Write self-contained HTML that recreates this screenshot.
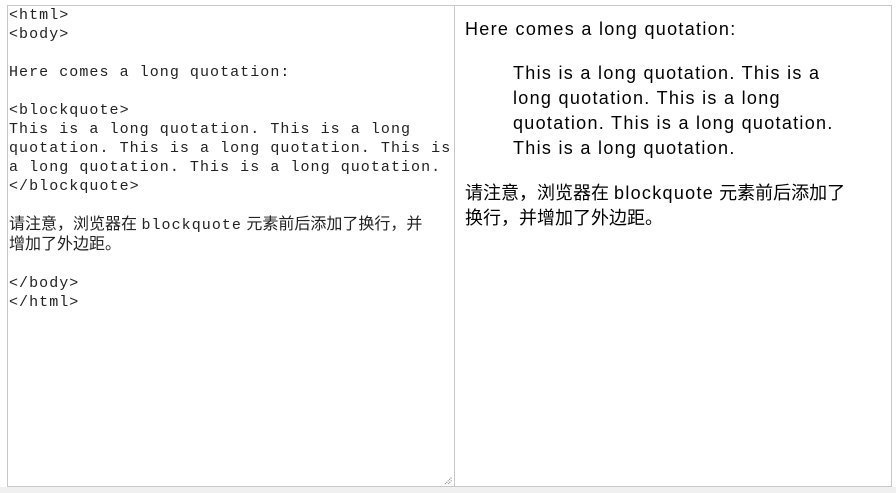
<!DOCTYPE html>
<html><head><meta charset="utf-8"><style>
body{margin:0;width:896px;height:493px;background:#f0f0f0;position:relative;overflow:hidden}
.top{position:absolute;left:0;top:0;width:896px;height:487px;background:#fff}
.l{position:absolute;left:7px;top:5px;width:446px;height:480px;border:1px solid #c8c8c8;background:#fff}
.r{position:absolute;left:455px;top:5px;width:436px;height:480px;border:1px solid #c8c8c8;border-left:none;background:#fff}
pre{margin:0;position:absolute;left:1px;top:0px;font:15px/19px "Liberation Mono","Noto Sans CJK SC",monospace;color:#222;letter-spacing:1.05px;white-space:pre}
pre .c{font-family:"Liberation Sans","Noto Sans CJK SC",sans-serif;letter-spacing:0;font-size:16px}
.rt{position:absolute;left:10px;top:0;font:18px/25px "Liberation Sans","Noto Sans CJK SC",sans-serif;color:#000;white-space:nowrap}
.rt p{margin:0}
.e{letter-spacing:1.3px}
</style></head><body>
<div class="top"></div>
<div class="l"><pre>&lt;html&gt;
&lt;body&gt;

Here comes a long quotation:

&lt;blockquote&gt;
This is a long quotation. This is a long
quotation. This is a long quotation. This is
a long quotation. This is a long quotation.
&lt;/blockquote&gt;

<span class="c">请注意，浏览器在 </span>blockquote<span class="c"> 元素前后添加了换行，并</span>
<span class="c">增加了外边距。</span>

&lt;/body&gt;
&lt;/html&gt;</pre>
<svg style="position:absolute;right:1px;bottom:1px" width="10" height="10"><path d="M2 9L9 2M5 9L9 5" stroke="#777" stroke-width="1" stroke-dasharray="1 1"/></svg>
</div>
<div class="r"><div class="rt">
<p style="margin-top:11px" class="e">Here comes a long quotation:</p>
<p style="margin:19px 0 0 48px" class="e">This is a long quotation. This is a<br>long quotation. This is a long<br>quotation. This is a long quotation.<br>This is a long quotation.</p>
<p style="margin-top:20px">请注意，浏览器在 <span class="e">blockquote</span> 元素前后添加了<br>换行，并增加了外边距。</p>
</div></div>
</body></html>
